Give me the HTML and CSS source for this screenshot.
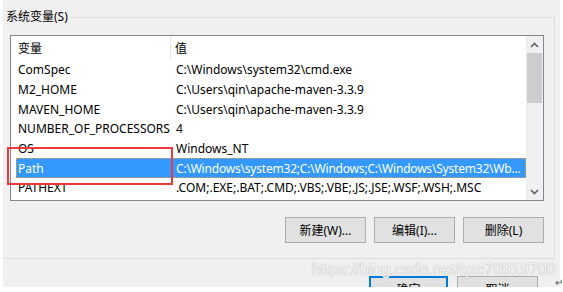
FILE: index.html
```html
<!DOCTYPE html>
<html lang="zh-CN">
<head>
<meta charset="utf-8">
<title>系统变量</title>
<link rel="stylesheet" href="styles.css">
</head>
<body>
<div class="screen">
  <div class="group">
    <span class="legend">系统变量(S)</span>
    <div class="listbox">
      <div class="list">
        <div class="header">
          <div class="hcell name">变量</div>
          <div class="hcell value">值</div>
        </div>
        <div class="row"><div class="name">ComSpec</div><div class="value">C:\Windows\system32\cmd.exe</div></div>
        <div class="row"><div class="name">M2_HOME</div><div class="value">C:\Users\qin\apache-maven-3.3.9</div></div>
        <div class="row"><div class="name">MAVEN_HOME</div><div class="value">C:\Users\qin\apache-maven-3.3.9</div></div>
        <div class="row"><div class="name">NUMBER_OF_PROCESSORS</div><div class="value">4</div></div>
        <div class="row"><div class="name">OS</div><div class="value">Windows_NT</div></div>
        <div class="row selected"><div class="name">Path</div><div class="value">C:\Windows\system32;C:\Windows;C:\Windows\System32\Wb...</div></div>
        <div class="row"><div class="name">PATHEXT</div><div class="value">.COM;.EXE;.BAT;.CMD;.VBS;.VBE;.JS;.JSE;.WSF;.WSH;.MSC</div></div>
      </div>
      <div class="scrollbar">
        <div class="arrow">
          <svg width="9" height="6" viewBox="0 0 9 6"><path d="M1 5 L4.5 1.5 L8 5" fill="none" stroke="#606060" stroke-width="1.6"/></svg>
        </div>
        <div class="thumb"></div>
        <div class="track"></div>
        <div class="arrow">
          <svg width="9" height="6" viewBox="0 0 9 6"><path d="M1 1 L4.5 4.5 L8 1" fill="none" stroke="#606060" stroke-width="1.6"/></svg>
        </div>
      </div>
    </div>
    <div class="buttons">
      <button class="btn">新建(W)...</button>
      <button class="btn">编辑(I)...</button>
      <button class="btn">删除(L)</button>
    </div>
  </div>
  <div class="dialog-buttons">
    <button class="btn ok">确定</button>
    <button class="btn cancel">取消</button>
  </div>
  <div class="highlight"></div>
  <div class="watermark">https://blog.csdn.net/qzc70919700</div>
</div>
<span class="return-mark">↵</span>
</body>
</html>
```
FILE: styles.css
```css
html, body {
  margin: 0;
  padding: 0;
  background: #ffffff;
}
body {
  width: 563px;
  height: 292px;
  overflow: hidden;
  position: relative;
  font-family: "Noto Sans", "Noto Sans CJK SC", sans-serif;
  font-size: 12px;
  color: #000;
}
.screen {
  position: relative;
  margin-left: 3px;
  width: 557px;
  height: 287px;
  background: #f0f0f0;
  overflow: hidden;
  padding-top: 17px;
  box-sizing: border-box;
}
.group {
  position: relative;
  width: 552px;
  box-sizing: border-box;
  border-top: 1px solid #dcdcdc;
  border-right: 1px solid #dcdcdc;
  border-bottom: 1px solid #dcdcdc;
  padding: 17px 10px 15px 7px;
}
.legend {
  position: absolute;
  left: 0;
  top: -10px;
  padding: 0 3px 0 3px;
  background: #f0f0f0;
  line-height: 18px;
  font-size: 12px;
}
.listbox {
  display: flex;
  width: 534px;
  height: 166px;
  box-sizing: border-box;
  border: 1px solid #828790;
  background: #ffffff;
}
.list {
  flex: 1;
  overflow: hidden;
  padding-left: 5px;
}
.header {
  display: grid;
  grid-template-columns: 155px 356px;
  height: 24px;
  align-items: stretch;
}
.hcell {
  display: flex;
  align-items: center;
}
.header .name {
  border-right: 1px solid #e5e5e5;
  margin-top: 1px;
  margin-bottom: 2px;
}
.header .value {
  border-right: 1px solid #e5e5e5;
  margin-top: 1px;
  margin-bottom: 2px;
}
.row {
  display: grid;
  grid-template-columns: 155px 356px;
  height: 19.67px;
  align-items: center;
  white-space: nowrap;
}
.name {
  padding-left: 2px;
  overflow: hidden;
}
.value {
  padding-left: 5px;
  overflow: hidden;
}
.header .value {
  padding-left: 4px;
}
.row.selected {
  background: #3399ff;
  color: #ffffff;
  outline: 1px dotted #e89a3c;
  outline-offset: -1px;
}
.row.selected .value {
  letter-spacing: -0.2px;
}
.scrollbar {
  width: 17px;
  display: flex;
  flex-direction: column;
  background: #f0f0f0;
}
.arrow {
  height: 17px;
  display: flex;
  align-items: center;
  justify-content: center;
}
.thumb {
  height: 50px;
  margin: 0 1px;
  background: #cdcdcd;
}
.track {
  flex: 1;
}
.buttons {
  display: flex;
  justify-content: flex-end;
  gap: 8px;
  margin-top: 16px;
  padding-right: 0;
  width: 534px;
}
.btn {
  width: 81px;
  height: 26px;
  box-sizing: border-box;
  border: 1px solid #adadad;
  background: #e1e1e1;
  font-family: "Noto Sans", "Noto Sans CJK SC", sans-serif;
  font-size: 12px;
  color: #000;
  padding: 0;
}
.dialog-buttons {
  display: flex;
  gap: 9px;
  margin-top: 17px;
  padding-left: 366px;
}
.btn.ok {
  width: 79px;
  border: 1px solid #0078d7;
  box-shadow: inset 0 0 0 1px #0078d7;
}
.btn.cancel {
  width: 81px;
}
.highlight {
  position: absolute;
  left: 4px;
  top: 147px;
  width: 166px;
  height: 38px;
  box-sizing: border-box;
  border: 2px solid #ec3a3d;
}
.watermark {
  position: absolute;
  left: 309px;
  top: 261px;
  font-family: "Liberation Sans", sans-serif;
  font-size: 16px;
  color: rgba(255, 255, 255, 0.85);
  text-shadow: 0 0 1px #b8b8b8, 0 0 1px #b8b8b8;
  white-space: nowrap;
}
.return-mark {
  position: absolute;
  left: 555px;
  top: 275px;
  font-size: 10px;
  color: #555;
}
```
